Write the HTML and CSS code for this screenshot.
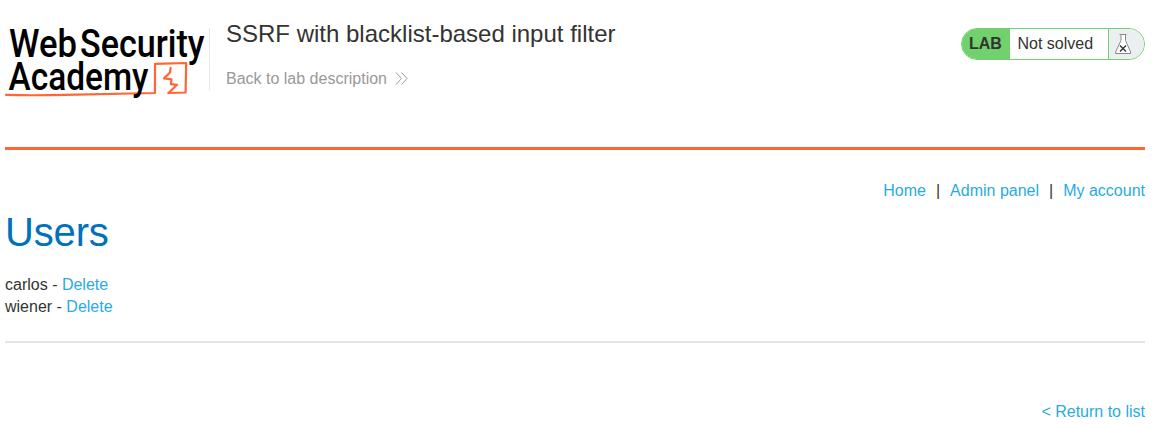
FILE: index.html
```html
<!DOCTYPE html>
<html lang="en">
<head>
<meta charset="utf-8">
<title>SSRF with blacklist-based input filter</title>
<link rel="stylesheet" href="styles.css">
</head>
<body>
<header class="lab-header">
  <svg class="logo" width="204" height="80" viewBox="5 20 204 80" role="img" aria-label="Web Security Academy">
    <path class="logo-line" d="M6 94.800 Q30 95.700 65 94.800 T155 93 L155 63.800 L186.200 63 L185.600 92.500 L168.500 93"/>
    <path class="logo-line" d="M170.600 67.800 L170 72.500 L164 78.400 L171.500 79.300 L170.800 84.200 L177 84.800 L168.500 93"/>
    <text class="logo-text" x="9" y="57" textLength="68" lengthAdjust="spacingAndGlyphs">Web</text>
    <text class="logo-text" x="80" y="57" textLength="124.500" lengthAdjust="spacingAndGlyphs">Security</text>
    <text class="logo-text" x="8.500" y="89.500" textLength="140" lengthAdjust="spacingAndGlyphs">Academy</text>
  </svg>
  <div class="title-box">
    <h2 class="title">SSRF with blacklist-based input filter</h2>
    <a class="back">Back to lab description
      <svg class="chevrons" width="13" height="13" viewBox="0 0 13 13"><path d="M1 .5 6.500 6.500 1 12.500M6.500 .5 12 6.500 6.500 12.500"/></svg>
    </a>
  </div>
  <div class="status">
    <span class="status-lab">LAB</span>
    <span class="status-text">Not solved</span>
    <span class="status-icon">
      <svg class="flask" width="17" height="21" viewBox="0 0 17 21"><path class="flask-body" d="M4.500 .5H11.500M6 .5V6.500L.6 18V19.500H15.600V18L10.500 6.500V.5"/><path class="flask-cross" d="M5 11.500 11 17.500M11 11.500 5 17.500"/></svg>
    </span>
  </div>
</header>
<main class="content">
  <nav class="nav"><a class="link">Home</a><span>|</span><a class="link">Admin panel</a><span>|</span><a class="link">My account</a></nav>
  <h1 class="heading">Users</h1>
  <div class="user">carlos - <a class="link">Delete</a></div>
  <div class="user">wiener - <a class="link">Delete</a></div>
  <hr class="rule">
  <div class="return"><a class="link">&lt; Return to list</a></div>
</main>
</body>
</html>
```
FILE: styles.css
```css
* { box-sizing: border-box; }
body {
  margin: 0;
  padding: 0 11px 0 5px;
  background: #fff;
  color: #333332;
  font: 16px/22px "Liberation Sans", Arial, sans-serif;
  overflow: hidden;
}
.lab-header {
  display: flex;
  align-items: flex-start;
  height: 150px;
  padding-top: 20px;
  border-bottom: 3px solid #ff6633;
}
.logo { overflow: visible; }
.logo-text { font: 500 38px Roboto, sans-serif; fill: #000; }
.logo-line { fill: none; stroke: #ff6633; stroke-width: 2.2; stroke-linejoin: round; stroke-linecap: round; }
.title-box {
  height: 62px;
  margin-top: 8px;
  padding-left: 16px;
  border-left: 1px solid #e3e5e4;
}
.title { margin: -8px 0 0; font-size: 24px; line-height: 28px; font-weight: 400; }
.back { display: flex; align-items: center; gap: 8px; margin-top: 20px; color: #999; }
.chevrons { margin-top: -1px; fill: none; stroke: #999; stroke-width: 1; }
.status {
  display: flex;
  width: 184px;
  height: 32px;
  margin: 8px 0 0 auto;
  border: 1px solid #70d16d;
  border-radius: 16px;
  overflow: hidden;
  line-height: 30px;
}
.status-lab { width: 48px; padding-left: 7px; background: #70d16d; font-weight: 700; }
.status-text { flex: 1; padding-left: 7.500px; }
.status-icon { width: 36px; padding: 5px 0 0 6px; border-left: 1px solid #70d16d; background: #ebeff2; }
.flask { display: block; fill: none; }
.flask-body { fill: #fff; stroke: #888; }
.flask-cross { stroke: #333; stroke-width: 1.4; }
.nav { display: flex; justify-content: flex-end; gap: 10px; padding-top: 30px; }
.link { color: #29abe2; }
.heading { margin: 7px 0 19px; color: #0071bc; font-size: 40px; line-height: 46px; font-weight: 400; letter-spacing: -.15px; }
.rule { height: 2px; margin: 23px 0 0; border: 0; background: #e3e5e4; }
.return { margin-top: 58px; text-align: right; }
```
